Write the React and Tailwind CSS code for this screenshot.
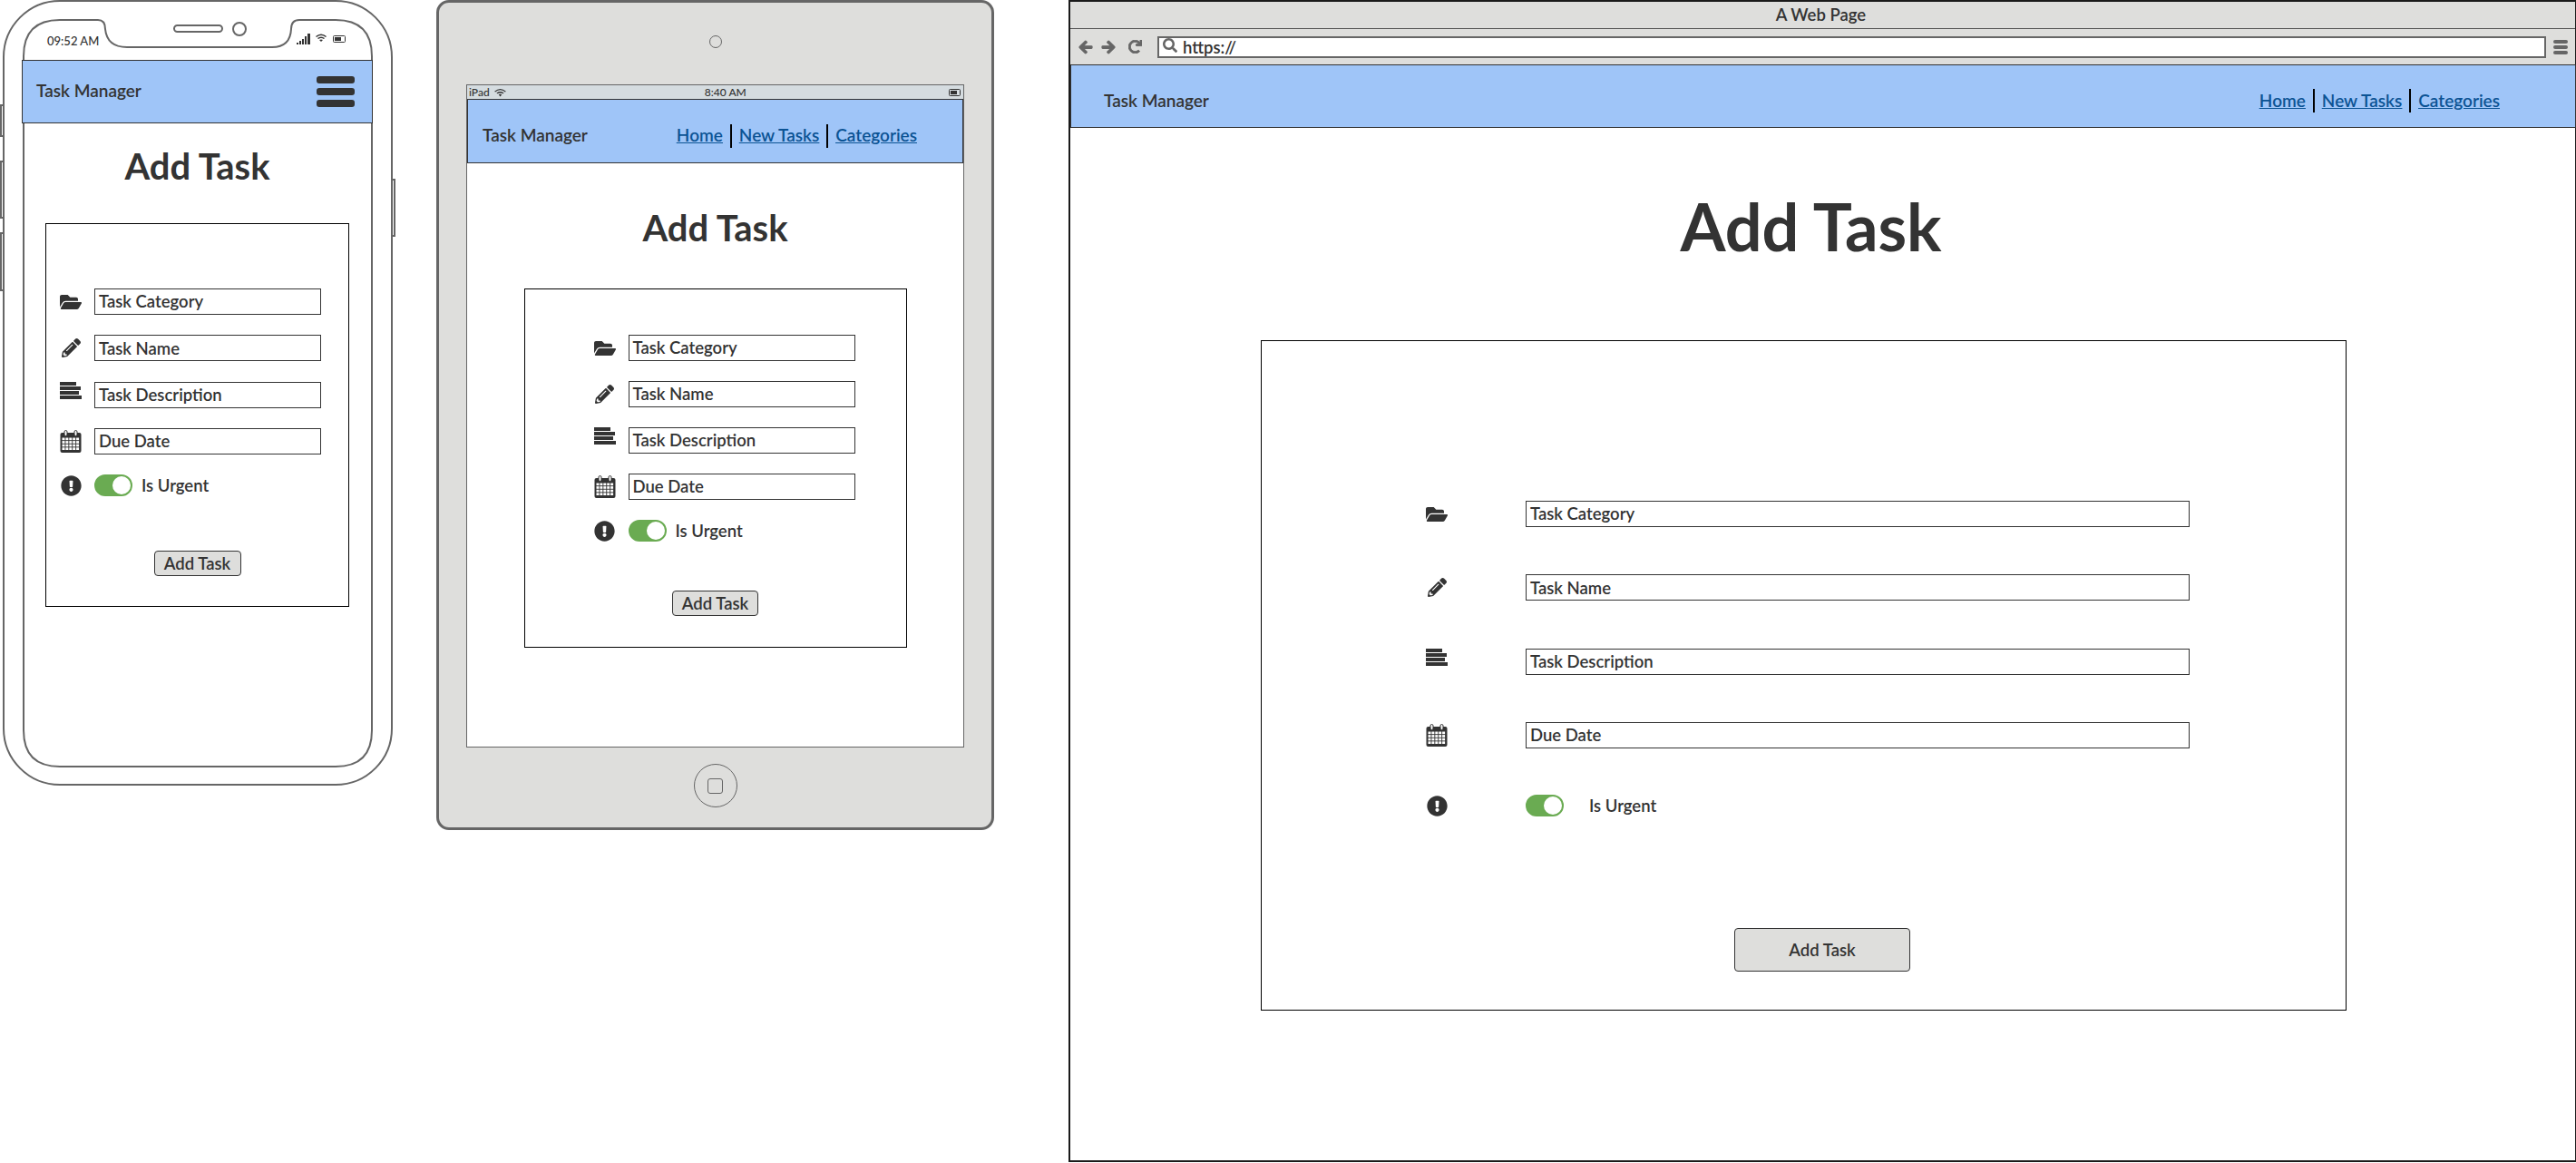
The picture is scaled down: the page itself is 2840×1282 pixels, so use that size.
import {
  FaFolderOpen,
  FaPencilAlt,
  FaExclamationCircle,
  FaArrowLeft,
  FaArrowRight,
  FaRedo,
  FaSearch,
} from "react-icons/fa";

const fontClass = "font-['Lato',sans-serif] font-semibold text-[#333]";

const AlignIcon = () => (
  <svg width="24" height="19" viewBox="0 0 24 19" fill="#333" className="self-start">
    <rect x="0" y="0" width="18" height="4" />
    <rect x="0" y="5" width="23" height="4" />
    <rect x="0" y="10" width="21" height="4" />
    <rect x="0" y="15" width="24" height="4" />
  </svg>
);

const CalendarIcon = () => {
  const cells = [];
  for (let r = 0; r < 4; r++) {
    for (let c = 0; c < 5; c++) {
      cells.push(<rect key={`${r}-${c}`} x={2.5 + c * 3.9} y={8.5 + r * 3.6} width="3" height="2.7" fill="#fff" />);
    }
  }
  return (
    <svg width="24" height="25" viewBox="0 0 24 25">
      <rect x="0.5" y="3" width="23" height="22" rx="2" fill="#333" />
      <rect x="5" y="0.5" width="3" height="6" rx="1.5" fill="#fff" stroke="#333" />
      <rect x="16" y="0.5" width="3" height="6" rx="1.5" fill="#fff" stroke="#333" />
      {cells}
    </svg>
  );
};

const Toggle = () => (
  <div className="w-[42px] h-[24px] rounded-full bg-[#6aab52] border-2 border-[#6aab52] flex justify-end shrink-0">
    <div className="w-[20px] h-full rounded-full bg-white" />
  </div>
);

const Field = ({ icon, label, inputWidth, iconGap }) => (
  <div className="flex items-center h-[29px]" style={{ gap: iconGap }}>
    <div className="w-[24px] h-full flex items-center justify-center shrink-0">{icon}</div>
    <div
      className="h-[29px] border border-[#333] bg-white flex items-center pl-[4px] text-[18.5px] leading-none"
      style={{ width: inputWidth }}
    >
      {label}
    </div>
  </div>
);

const fields = [
  { label: "Task Category", icon: <FaFolderOpen size={24} color="#333" /> },
  { label: "Task Name", icon: <FaPencilAlt size={21} color="#333" /> },
  { label: "Task Description", icon: <AlignIcon /> },
  { label: "Due Date", icon: <CalendarIcon /> },
];

const TaskForm = ({ box, rows, inputWidth, iconGap, rowGap, toggleGap, toggleTop = 0, button }) => (
  <div className={`border border-black bg-white flex flex-col ${box}`}>
    <div className={`flex flex-col ${rows}`} style={{ gap: rowGap }}>
      {fields.map((f) => (
        <Field key={f.label} {...f} inputWidth={inputWidth} iconGap={iconGap} />
      ))}
      <div className="flex items-center h-[24px]" style={{ gap: iconGap, marginTop: toggleTop }}>
        <div className="w-[24px] flex justify-center shrink-0">
          <FaExclamationCircle size={23} color="#333" />
        </div>
        <Toggle />
        <span className="text-[18.5px] leading-none" style={{ marginLeft: toggleGap }}>
          Is Urgent
        </span>
      </div>
    </div>
    <button
      className={`bg-[#dededc] border border-[#333] rounded-[4px] text-[18.5px] leading-none text-[#333] font-semibold ${button}`}
    >
      Add Task
    </button>
  </div>
);

const NavLinks = () => (
  <div className="flex items-center gap-[8px] text-[19px] text-[#0b5394] underline">
    <a>Home</a>
    <div className="w-[2px] h-[26px] bg-black" />
    <a>New Tasks</a>
    <div className="w-[2px] h-[26px] bg-black" />
    <a>Categories</a>
  </div>
);

const PhoneFrame = () => (
  <svg width="437" height="866" viewBox="0 0 437 866" fill="none" stroke="#666" strokeWidth="2" className="absolute inset-0">
    <rect x="4" y="1" width="428" height="864" rx="62" />
    <path d="M26 66V62Q26 22 66 22H108Q116 22 116 32Q118 52 140 52H300Q320 52 321 32Q321 22 330 22H370Q410 22 410 62V805Q410 845 370 845H66Q26 845 26 805Z" />
    <rect x="192" y="28" width="53" height="7" rx="3.5" />
    <circle cx="264" cy="32" r="7" />
    <path d="M3 116H1V150H3M3 178H1V240H3M3 257H1V320H3M433 198H435V260H433" />
  </svg>
);

const Phone = () => (
  <div className="relative w-[437px] h-[866px] shrink-0">
    <PhoneFrame />
    <div className="relative flex flex-col">
      <div className="h-[66px] pt-[36px] pl-[52px] pr-[55px] flex justify-between items-start">
        <span className="text-[13px] leading-[18px] font-medium">09:52 AM</span>
        <svg width="55" height="14" viewBox="0 0 55 14" fill="#333">
          <rect x="0" y="11" width="2" height="2" />
          <rect x="3" y="9" width="2" height="4" />
          <rect x="6" y="7" width="2" height="6" />
          <rect x="9" y="4" width="2" height="9" />
          <rect x="12" y="1" width="3" height="12" />
          <path d="M21 4Q27 -1 33 4L32 5Q27 1 22 5ZM23 6Q27 3 31 6L30 7Q27 5 24 7ZM25 8Q27 7 29 8L27 10Z" />
          <rect x="40.5" y="3.5" width="13" height="7" rx="1" fill="none" stroke="#333" />
          <rect x="42" y="5" width="7" height="4" />
        </svg>
      </div>
      <div className="ml-[24px] w-[387px] h-[70px] bg-[#9fc5f8] border border-[#333] flex items-center justify-between pl-[15px] pr-[19px]">
        <span className="text-[19px] -mt-[2px]">Task Manager</span>
        <div className="flex flex-col gap-[5px]">
          <div className="w-[42px] h-[8px] rounded-[3px] bg-[#333]" />
          <div className="w-[42px] h-[8px] rounded-[3px] bg-[#333]" />
          <div className="w-[42px] h-[8px] rounded-[3px] bg-[#333]" />
        </div>
      </div>
      <h1 className="ml-[24px] w-[387px] text-center text-[40px] leading-[48px] mt-[23px] font-bold">Add Task</h1>
      <TaskForm
        box="ml-[50px] mt-[39px] w-[335px] h-[423px]"
        rows="pt-[71px] pl-[15px]"
        inputWidth={250}
        iconGap="14px"
        rowGap="22.3px"
        toggleGap="-4px"
        button="self-center w-[96px] h-[28px] mt-[60px]"
      />
    </div>
  </div>
);

const Tablet = () => (
  <div className="ml-[44px] w-[615px] h-[915px] shrink-0 bg-[#dededc] border-[3px] border-[#666] rounded-[14px] flex flex-col items-center">
    <div className="w-[14px] h-[14px] rounded-full border border-[#666] mt-[36px]" />
    <div className="w-[549px] h-[731px] mt-[40px] border border-[#666] bg-white flex flex-col">
      <div className="h-[15px] bg-[#d5dce0] flex items-center justify-between px-[2px] text-[12px] leading-none font-medium">
        <div className="flex items-center gap-[5px]">
          <span>iPad</span>
          <svg width="13" height="10" viewBox="12 0 14 11" fill="#333">
            <path d="M12 4Q19 -2 26 4L25 5Q19 0 13 5ZM14.5 6Q19 3 23.5 6L22.5 7Q19 5 15.5 7ZM17 8Q19 7 21 8L19 10.5Z" />
          </svg>
        </div>
        <span className="mr-[4px]">8:40 AM</span>
        <svg width="14" height="8" viewBox="0 0 14 8" fill="none">
          <rect x="0.5" y="0.5" width="12" height="7" rx="1" stroke="#333" />
          <rect x="2" y="2" width="7" height="4" fill="#333" />
        </svg>
      </div>
      <div className="h-[71px] bg-[#9fc5f8] border border-[#333] flex items-center justify-between pt-[10px] pl-[16px] pr-[50px]">
        <span className="text-[19px]">Task Manager</span>
        <NavLinks />
      </div>
      <h1 className="text-center text-[40px] leading-[48px] mt-[47px] font-bold">Add Task</h1>
      <div className="flex justify-center mt-[43px]">
        <TaskForm
          box="w-[422px] h-[396px]"
          rows="pt-[50px] pl-[76px]"
          inputWidth={250}
          iconGap="14px"
          rowGap="22px"
          toggleGap="-4px"
          button="self-center w-[95px] h-[28px] mt-[54px]"
        />
      </div>
    </div>
    <div className="w-[48px] h-[48px] rounded-full border border-[#666] mt-[18px] flex items-center justify-center">
      <div className="w-[17px] h-[17px] rounded-[3px] border border-[#666]" />
    </div>
  </div>
);

const Browser = () => (
  <div className="ml-[82px] w-[1663px] h-[1281px] shrink-0 border-2 border-[#1a1a1a] bg-white flex flex-col">
    <div className="h-[30px] bg-[#dededc] border-b border-[#555] flex items-center justify-center text-[18.5px] leading-none pr-[4px]">
      A Web Page
    </div>
    <div className="h-[39px] bg-[#dededc] flex items-center pl-[9px] pr-[8px]">
      <FaArrowLeft size={16} color="#666" stroke="#666" strokeWidth={40} />
      <FaArrowRight size={16} color="#666" stroke="#666" strokeWidth={40} className="ml-[9px]" />
      <FaRedo size={15} color="#666" stroke="#666" strokeWidth={30} className="ml-[14px]" />
      <div className="ml-[17px] flex-1 h-[24px] bg-white border-2 border-[#666] flex items-center pl-[4px]">
        <FaSearch size={16} color="#666" className="-mt-[4px]" />
        <span className="ml-[6px] text-[18.5px] leading-none mt-[2px]">https://</span>
      </div>
      <div className="ml-[8px] flex flex-col gap-[2px]">
        <div className="w-[16px] h-[4px] rounded-[2px] bg-[#666]" />
        <div className="w-[16px] h-[4px] rounded-[2px] bg-[#666]" />
        <div className="w-[16px] h-[4px] rounded-[2px] bg-[#666]" />
      </div>
    </div>
    <div className="h-[70px] -mr-[1px] bg-[#9fc5f8] border border-[#333] flex items-center justify-between pt-[10px] pl-[36px] pr-[83px]">
      <span className="text-[19px]">Task Manager</span>
      <NavLinks />
    </div>
    <h1 className="w-[1633px] text-center text-[72px] leading-[84px] mt-[66px] font-bold">Add Task</h1>
    <TaskForm
      box="ml-[210px] mt-[84px] w-[1197px] h-[739px]"
      rows="pt-[176px] pl-[181px]"
      inputWidth={732}
      iconGap="86px"
      rowGap="52.3px"
      toggleGap="-58px"
      toggleTop="-1px"
      button="ml-[521px] w-[194px] h-[48px] mt-[123px]"
    />
  </div>
);

export default function App() {
  return (
    <div className={`flex items-start w-[2840px] h-[1282px] overflow-hidden bg-white ${fontClass}`}>
      <Phone />
      <Tablet />
      <Browser />
    </div>
  );
}
